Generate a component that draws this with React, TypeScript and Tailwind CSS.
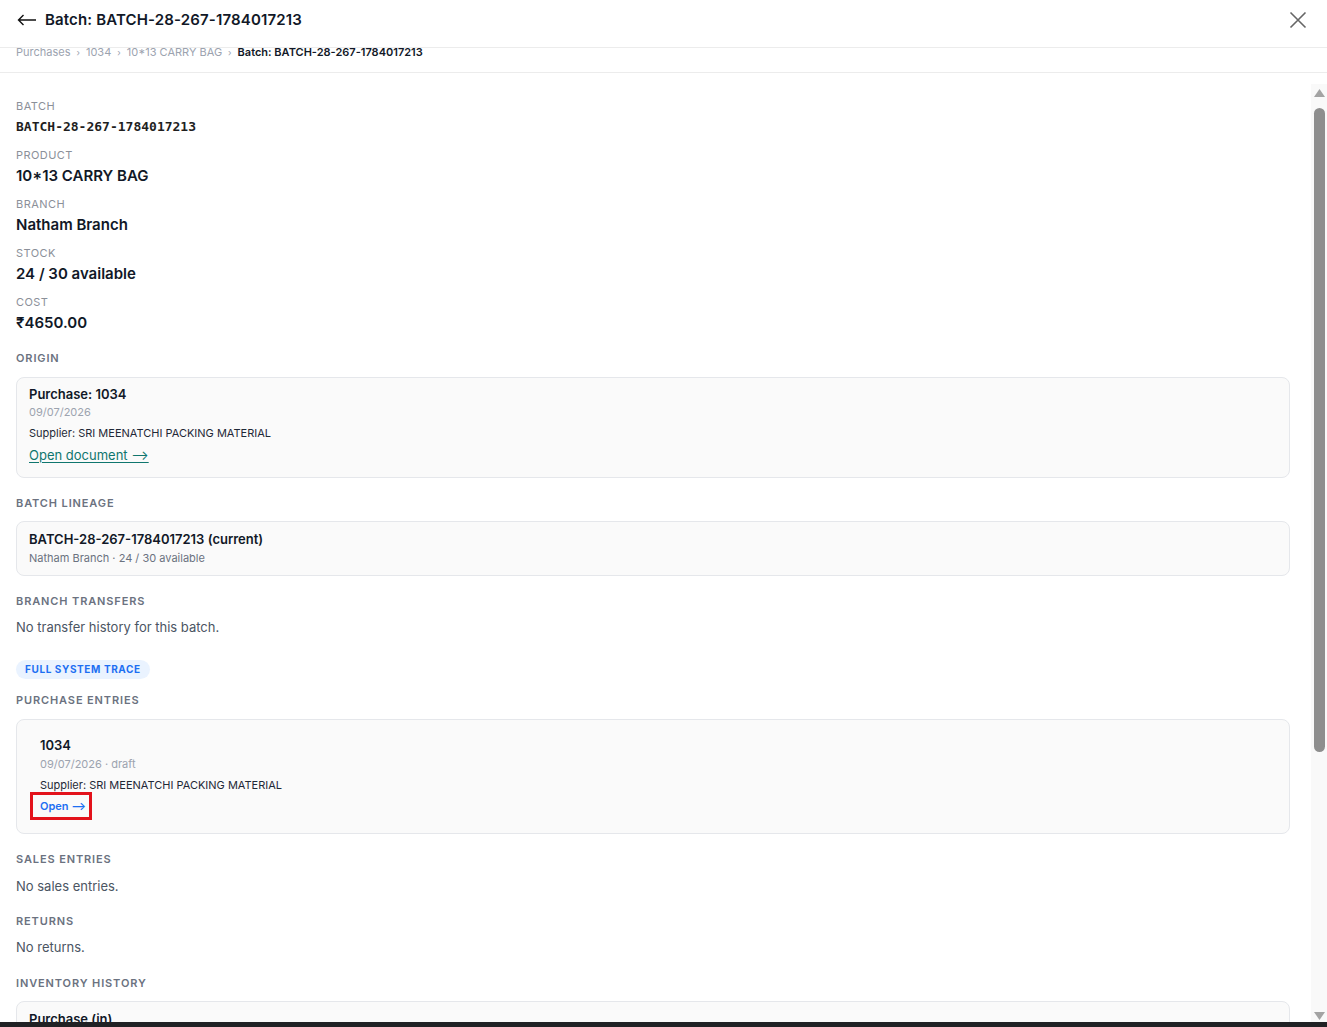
import type { ReactNode } from 'react'

const FIELDS: { label: string; value: string; mono?: boolean }[] = [
  { label: 'Batch', value: 'BATCH-28-267-1784017213', mono: true },
  { label: 'Product', value: '10*13 CARRY BAG' },
  { label: 'Branch', value: 'Natham Branch' },
  { label: 'Stock', value: '24 / 30 available' },
  { label: 'Cost', value: '₹4650.00' },
]

function SectionTitle({ children, className = '' }: { children: ReactNode; className?: string }) {
  return (
    <div className={`text-[11px] leading-4 font-semibold uppercase tracking-[0.08em] text-[#6b7280] ${className}`}>
      {children}
    </div>
  )
}

function Card({ children, className = '' }: { children: ReactNode; className?: string }) {
  return (
    <div className={`rounded-lg border border-[#e5e7eb] bg-[#fafafa] ${className}`}>{children}</div>
  )
}

// classic scrollbar with arrow buttons
function Scrollbar() {
  return (
    <div className="w-[16px] shrink-0 bg-[#f9f9f9] flex flex-col items-center">
      <svg className="mt-[5px]" width="11" height="8" viewBox="0 0 11 8">
        <path d="M5.5 0L11 8H0z" fill="#a3a3a3" />
      </svg>
      <div className="mt-[11px] h-[644px] w-[11px] rounded-full bg-[#8e8e8e]" />
      <div className="flex-1" />
      <svg className="mb-[2px]" width="11" height="8" viewBox="0 0 11 8">
        <path d="M0 0h11L5.5 8z" fill="#a3a3a3" />
      </svg>
    </div>
  )
}

export default function App() {
  return (
    <div className="h-screen flex flex-col bg-white text-[#111827] font-['Inter',sans-serif] overflow-hidden">
      {/* Header */}
      <div className="h-[48px] shrink-0 flex items-start justify-between pl-[17px] pr-[20px] pt-[9px] border-b border-[#ececec]">
        <div className="flex items-center gap-[8px] h-[22px]">
          <svg width="20" height="12" viewBox="0 0 20 12" fill="none" stroke="#111" strokeWidth="1.4">
            <path d="M19 6H1.5M6.5 1L1.5 6l5 5" />
          </svg>
          <span className="text-[15px] leading-[22px] font-semibold tracking-[0.01em]">Batch: BATCH-28-267-1784017213</span>
        </div>
        <button className="text-[#666] h-[22px] flex items-center">
          <svg width="18" height="18" viewBox="0 0 18 18" fill="none" stroke="currentColor" strokeWidth="1.6">
            <path d="M1.5 1.5l15 15M16.5 1.5l-15 15" />
          </svg>
        </button>
      </div>

      {/* Breadcrumb */}
      <div className="h-[25px] shrink-0 border-b border-[#ececec] px-4 flex items-start">
        <div className="flex items-center gap-[6px] text-[11px] leading-[11px] text-[#9ca3af] -mt-[1px]">
          <span>Purchases</span>
          <span className="text-[9px]">›</span>
          <span>1034</span>
          <span className="text-[9px]">›</span>
          <span>10*13 CARRY BAG</span>
          <span className="text-[9px]">›</span>
          <span className="font-semibold text-[#111827]">Batch: BATCH-28-267-1784017213</span>
        </div>
      </div>

      {/* Scrolling body */}
      <div className="mt-[11px] flex-1 min-h-0 flex">
        <div className="flex-1 min-w-0 overflow-hidden pl-4 pr-[21px] pt-[14px]">
          <div className="flex flex-col gap-[9px]">
            {FIELDS.map((f) => (
              <div key={f.label}>
                <div className="text-[11px] leading-4 uppercase tracking-[0.04em] text-[#8b9099]">{f.label}</div>
                <div
                  className={
                    f.mono
                      ? "mt-0.5 text-[13px] leading-[22px] font-bold text-[#1f1f1f] font-['DejaVu_Sans_Mono',monospace]"
                      : 'mt-0.5 text-[15px] leading-[22px] font-semibold'
                  }
                >
                  {f.value}
                </div>
              </div>
            ))}
          </div>

          {/* Origin */}
          <SectionTitle className="mt-4">Origin</SectionTitle>
          <Card className="mt-[11px] px-3 pt-[8px] pb-[12px]">
            <div className="text-[13px] leading-4 font-semibold">Purchase: 1034</div>
            <div className="mt-[2px] text-[11px] leading-4 text-[#9ca3af]">09/07/2026</div>
            <div className="mt-[5px] text-[11px] leading-4 text-[#1f2937]">Supplier: SRI MEENATCHI PACKING MATERIAL</div>
            <a className="mt-[4px] block w-fit text-[13px] leading-5 text-[#0f766e] underline underline-offset-2" href="#">
              Open document ⟶
            </a>
          </Card>

          {/* Lineage */}
          <SectionTitle className="mt-[17px]">Batch lineage</SectionTitle>
          <Card className="mt-[10px] px-3 pt-[9px] pb-[10px]">
            <div className="text-[13px] leading-4 font-semibold">BATCH-28-267-1784017213 (current)</div>
            <div className="mt-[4px] text-[11px] leading-[14px] text-[#6b7280]">Natham Branch · 24 / 30 available</div>
          </Card>

          {/* Transfers */}
          <SectionTitle className="mt-[17px]">Branch transfers</SectionTitle>
          <div className="mt-2 text-[13px] leading-5 text-[#4b5563]">No transfer history for this batch.</div>

          <div className="mt-[23px] inline-flex h-[19px] items-center rounded-full bg-[#eaf3ff] px-[9px] text-[10px] font-bold uppercase tracking-[0.06em] text-[#1d6ff2]">
            Full system trace
          </div>

          {/* Purchase entries */}
          <SectionTitle className="mt-[13px]">Purchase entries</SectionTitle>
          <Card className="mt-[11px] px-[23px] pt-[17px] pb-[19px]">
            <div className="text-[13px] leading-4 font-semibold">1034</div>
            <div className="mt-[3px] text-[11px] leading-4 text-[#9ca3af]">09/07/2026 · draft</div>
            <div className="mt-[5px] text-[11px] leading-4 text-[#1f2937]">Supplier: SRI MEENATCHI PACKING MATERIAL</div>
            <a href="#" className="relative mt-[5px] block w-fit text-[11px] leading-4 font-semibold text-[#1d6ff2]">
              Open ⟶
              <span className="absolute -left-[10px] -right-[6px] -top-[6px] -bottom-[6px] border-[3px] border-[#e3121b]" />
            </a>
          </Card>

          {/* Sales */}
          <SectionTitle className="mt-[17px]">Sales entries</SectionTitle>
          <div className="mt-[9px] text-[13px] leading-5 text-[#4b5563]">No sales entries.</div>

          <SectionTitle className="mt-[17px]">Returns</SectionTitle>
          <div className="mt-2 text-[13px] leading-5 text-[#4b5563]">No returns.</div>

          <SectionTitle className="mt-[18px]">Inventory history</SectionTitle>
          <Card className="mt-[10px] px-3 pt-[9px] pb-[11px]">
            <div className="text-[13px] leading-4 font-semibold">Purchase (in)</div>
            <div className="mt-[2px] text-[11px] leading-4 text-[#9ca3af]">09/07/2026</div>
            <div className="mt-[5px] text-[11px] leading-4 text-[#1f2937]">+30 units · Natham Branch</div>
          </Card>
        </div>
        <Scrollbar />
      </div>

      <div className="h-[5px] shrink-0 bg-[#202124]" />
    </div>
  )
}
